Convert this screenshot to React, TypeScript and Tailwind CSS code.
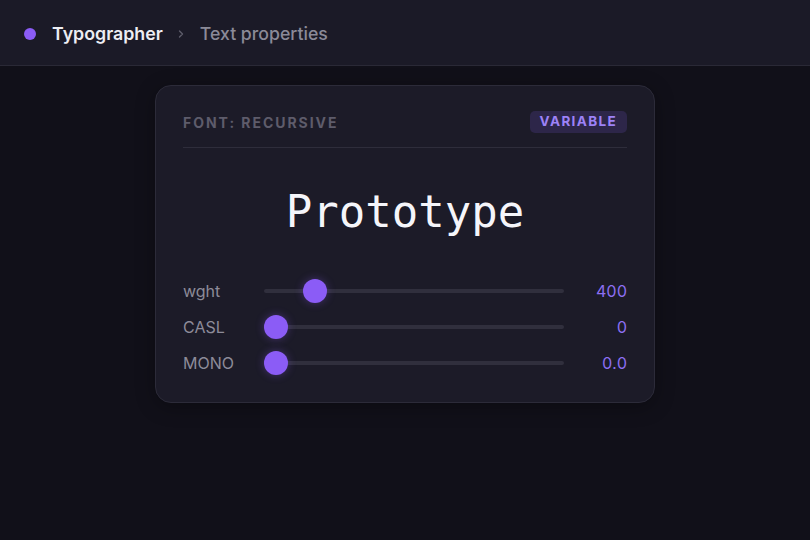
import React from "react";

const rows = [
  { label: "wght", value: "400", t: 0.143 },
  { label: "CASL", value: "0", t: 0 },
  { label: "MONO", value: "0.0", t: 0 },
];

function Slider({ t }: { t: number }) {
  const left = t * (300 - 24);
  return (
    <div className="relative h-6 w-[300px] flex items-center">
      <div className="h-[4px] w-full rounded-full bg-[#302f3d]" />
      <div
        className="absolute top-0 h-6 w-6 rounded-full bg-[#8b5cf6] shadow-[0_0_8px_rgba(139,92,246,0.35)]"
        style={{ left }}
      />
    </div>
  );
}

export default function App() {
  return (
    <div
      className="w-[810px] h-[540px] bg-[#111019] flex flex-col overflow-hidden"
      style={{ fontFamily: "Inter, 'Noto Sans', sans-serif" }}
    >
      <header className="h-[66px] shrink-0 bg-[#1b1a27] border-b border-[#2a2936] flex items-center pl-6 pt-[3px]">
        <span className="w-3 h-3 rounded-full bg-[#8b5cf6]" />
        <span className="ml-4 text-[17.8px] font-semibold text-[#ededf3]">Typographer</span>
        <svg className="ml-[14px]" width="8" height="10" viewBox="0 0 8 10" fill="none">
          <path d="M2.5 2l3 3-3 3" stroke="#5d5c6a" strokeWidth="1.4" strokeLinecap="round" strokeLinejoin="round" />
        </svg>
        <span className="ml-[15px] text-[17.7px] font-medium text-[#8b8a98]">Text properties</span>
      </header>
      <main className="flex justify-center pt-[19px]">
        <div className="w-[500px] rounded-[16px] border border-[#2c2b39] bg-[#1c1b28] px-[27px] pt-6 pb-[27px] shadow-[0_4px_20px_rgba(0,0,0,0.3)]">
          <div className="flex items-center justify-between border-b border-[#2e2d3b] pb-[14px]">
            <span className="text-[14px] font-bold tracking-[0.14em] text-[#5e5c6b] pt-[2px]">FONT: RECURSIVE</span>
            <span className="h-[22px] px-[10px] flex items-center rounded-[5px] bg-[#2d2649] text-[13.5px] font-bold tracking-[0.1em] text-[#9d82f7]">
              VARIABLE
            </span>
          </div>
          <div
            className="text-center text-[44px] leading-[53px] text-[#f5f5fa] mt-[37px] mb-[41px]"
            style={{ fontFamily: "'DejaVu Sans Mono', 'Liberation Mono', monospace" }}
          >
            Prototype
          </div>
          <div className="flex flex-col gap-3">
            {rows.map((r) => (
              <div key={r.label} className="flex items-center h-6">
                <span className="w-[81px] text-[16px] text-[#8d8b99]">{r.label}</span>
                <Slider t={r.t} />
                <span className="flex-1 text-right text-[16px] text-[#8c6ff2] tabular-nums">
                  {r.value}
                </span>
              </div>
            ))}
          </div>
        </div>
      </main>
    </div>
  );
}
